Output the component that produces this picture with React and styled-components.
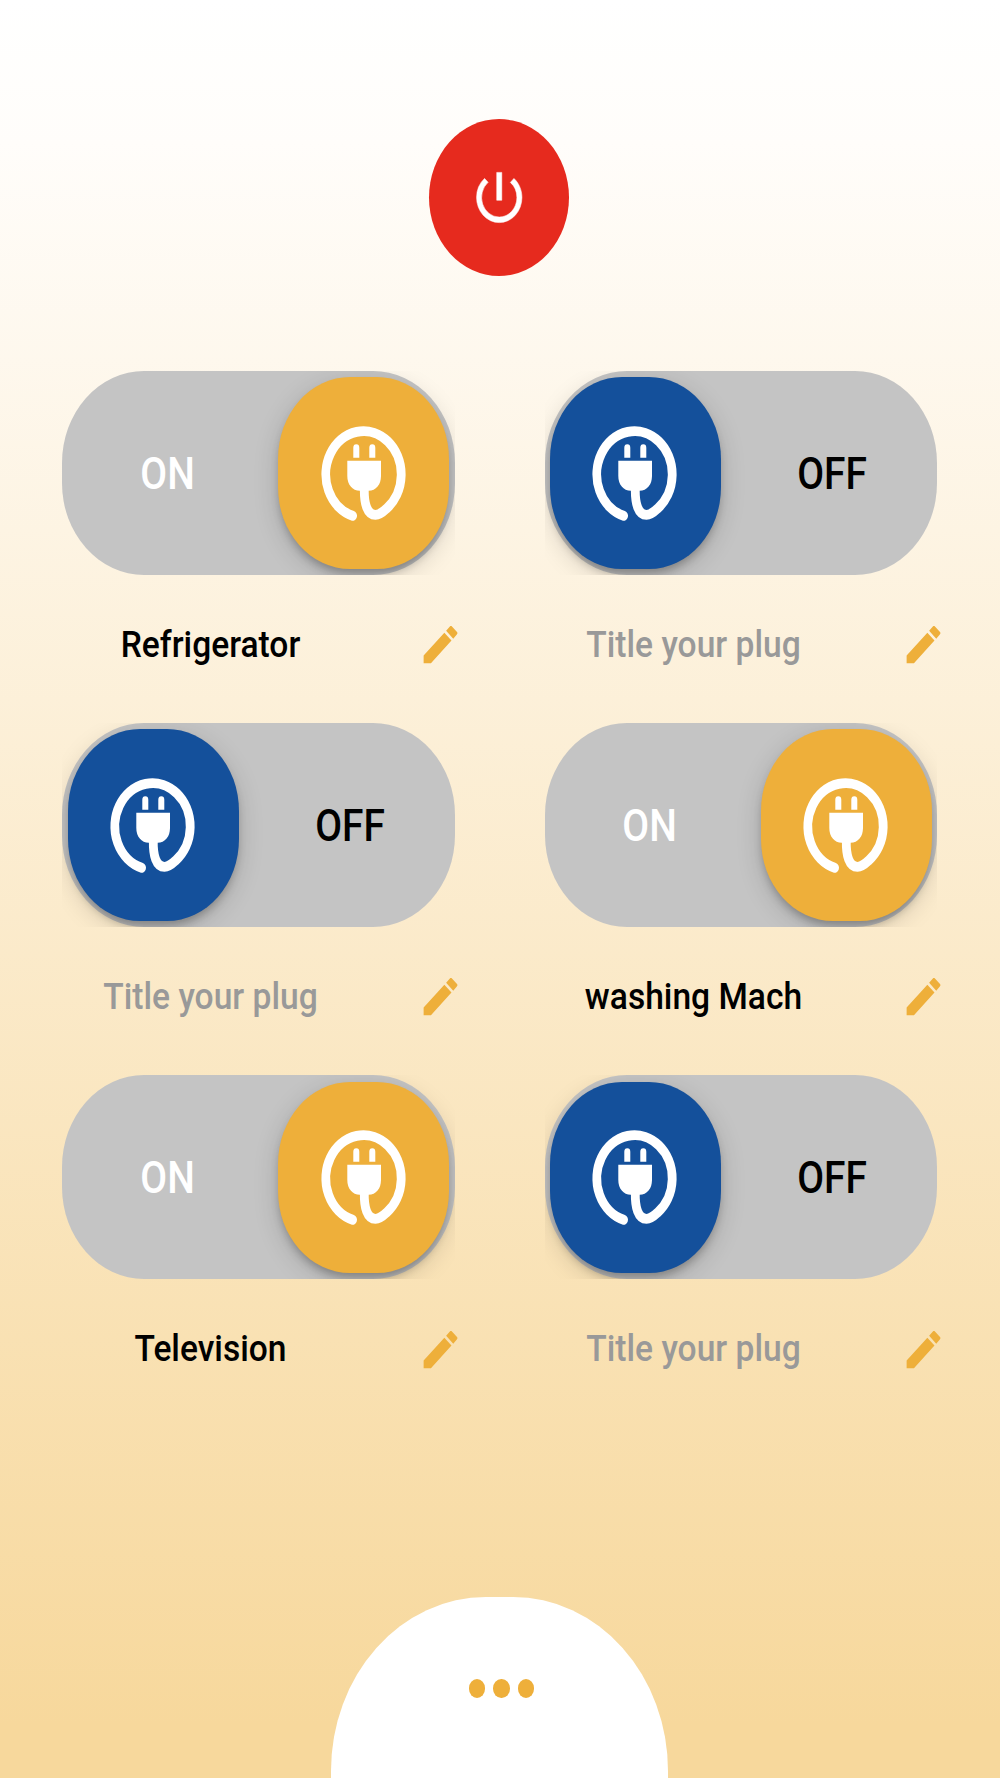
import { useState } from "react";
import styled, { createGlobalStyle } from "styled-components";
import { MdPowerSettingsNew } from "react-icons/md";

const GlobalStyle = createGlobalStyle`
  * {
    box-sizing: border-box;
  }
  body {
    margin: 0;
    font-family: Roboto, "Liberation Sans", sans-serif;
  }
`;

const Page = styled.main`
  display: flex;
  flex-direction: column;
  align-items: center;
  height: 1778px;
  padding-top: 119.4px;
  overflow: hidden;
  background: linear-gradient(#ffffff 0%, #fffdfa 8%, #f7d89c 97%);
`;

const PowerButton = styled.button`
  display: flex;
  align-items: center;
  justify-content: center;
  flex-shrink: 0;
  width: 140px;
  height: 157px;
  margin-right: 2px;
  padding: 0;
  border: none;
  border-radius: 50%;
  color: white;
  background: #e62a1e;
  cursor: pointer;
  svg {
    width: 60.5px;
    height: 67px;
  }
  path:last-child {
    stroke: white;
    stroke-width: 0.2px;
  }
`;

const PlugGrid = styled.section`
  display: grid;
  grid-template-columns: 392.4px 392.4px;
  grid-auto-rows: 352.2px;
  column-gap: 90px;
  margin: 94.6px 1px 0 0;
`;

const Plug = styled.div`
  display: flex;
  flex-direction: column;
`;

const Switch = styled.button`
  display: block;
  width: 392.4px;
  height: 204px;
  padding: 0;
  border: none;
  overflow: hidden;
  background: none;
  font-family: inherit;
  cursor: pointer;
`;

const Track = styled.span`
  display: flex;
  flex-direction: ${({ $on }) => ($on ? "row-reverse" : "row")};
  align-items: center;
  height: 204px;
  padding: 0 5.4px;
  border-radius: 82px / 92px;
  background: #c4c4c4;
`;

const Knob = styled.span`
  display: flex;
  align-items: center;
  justify-content: center;
  flex-shrink: 0;
  width: 171px;
  height: 191.5px;
  border-radius: 72px / 82px;
  background: ${({ $on }) => ($on ? "#eeaf3a" : "#14509b")};
  box-shadow: 0 6px 8px -2px rgba(0, 0, 0, 0.25),
    0 7px 24px 1px rgba(0, 0, 0, 0.15);
`;

const State = styled.span`
  flex: 1;
  padding: ${({ $on }) => ($on ? "2px 13px 0 0" : "2px 0 0 13px")};
  color: ${({ $on }) => ($on ? "white" : "black")};
  font-size: 44px;
  font-weight: 500;
  line-height: 52px;
  text-align: center;
  transform: scaleX(0.885);
`;

const TitleRow = styled.div`
  display: flex;
  align-items: center;
  width: 402px;
  height: 50px;
  margin-top: 45px;
`;

const Title = styled.span`
  width: 297px;
  color: ${({ $empty }) => ($empty ? "#999999" : "black")};
  font-size: 36.5px;
  font-weight: 500;
  line-height: 50px;
  text-align: center;
  white-space: nowrap;
  transform: scaleX(0.92);
`;

const EditButton = styled.button`
  display: flex;
  margin: 0 0 0 59px;
  padding: 0;
  border: none;
  color: #eeaf3a;
  background: none;
  cursor: pointer;
  svg {
    width: 45px;
    height: 49.5px;
  }
`;

const Drawer = styled.nav`
  display: flex;
  justify-content: center;
  flex-shrink: 0;
  gap: 8px;
  width: 337px;
  height: 181px;
  margin: auto 2px 0 0;
  padding: 82px 0 0 5px;
  border-radius: 155px 155px 0 0 / 174px 174px 0 0;
  background: white;
`;

const Dot = styled.span`
  width: 16.5px;
  height: 18.5px;
  border-radius: 50%;
  background: #eeaf3a;
`;

function PencilIcon() {
  return (
    <svg viewBox="0 0 24 24" preserveAspectRatio="none" fill="currentColor">
      <path d="M3 17.25V21h3.9L17.85 9.95l-3.8-3.8zM20.8 6.95c.3-.3.3-.8 0-1.1l-2.7-2.7c-.3-.3-.8-.3-1.1 0l-2 2.1 3.8 3.8z" />
    </svg>
  );
}

function PlugIcon() {
  return (
    <svg width="120" height="130" viewBox="0 0 120 130" fill="white">
      <g transform="translate(-3 2) scale(1 1.125)">
        <path
          d="M51.6 94A37.7 38.4 0 1 1 85.6 87.6C81.6 91 78.5 93.2 74.5 93.2C66 93.2 63 83 63.3 70"
          fill="none"
          stroke="white"
          strokeWidth="8.8"
          strokeLinecap="round"
        />
        <path d="M52.3 42.5v-9a3 3 0 0 1 6 0v9zM68.3 42.5v-9a3 3 0 0 1 6 0v9z" />
        <path d="M46.3 45H80v13.5c0 8-5 13.3-12.5 13.3h-8.7c-7.5 0-12.5-5.3-12.5-13.3z" />
      </g>
    </svg>
  );
}

function PlugItem({ title, defaultOn }) {
  const [on, setOn] = useState(defaultOn);
  return (
    <Plug>
      <Switch onClick={() => setOn(!on)}>
        <Track $on={on}>
          <Knob $on={on}>
            <PlugIcon />
          </Knob>
          <State $on={on}>{on ? "ON" : "OFF"}</State>
        </Track>
      </Switch>
      <TitleRow>
        <Title $empty={!title}>{title || "Title your plug"}</Title>
        <EditButton aria-label="Edit title">
          <PencilIcon />
        </EditButton>
      </TitleRow>
    </Plug>
  );
}

const plugs = [
  { id: 1, title: "Refrigerator", on: true },
  { id: 2, title: "", on: false },
  { id: 3, title: "", on: false },
  { id: 4, title: "washing Mach", on: true },
  { id: 5, title: "Television", on: true },
  { id: 6, title: "", on: false },
];

export default function App() {
  return (
    <>
      <GlobalStyle />
      <Page>
        <PowerButton aria-label="Power">
          <MdPowerSettingsNew preserveAspectRatio="none" />
        </PowerButton>
        <PlugGrid>
          {plugs.map((plug) => (
            <PlugItem key={plug.id} title={plug.title} defaultOn={plug.on} />
          ))}
        </PlugGrid>
        <Drawer>
          <Dot />
          <Dot />
          <Dot />
        </Drawer>
      </Page>
    </>
  );
}
